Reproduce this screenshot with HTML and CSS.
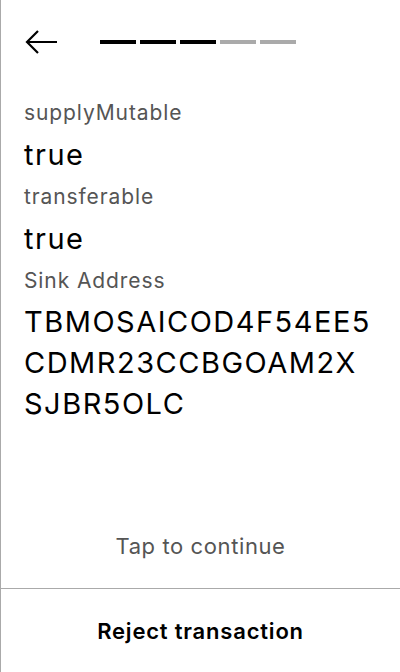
FILE: index.html
```html
<!DOCTYPE html>
<html>
<head>
<meta charset="utf-8">
<link rel="stylesheet" href="styles.css">
</head>
<body>
<div class="screen">
  <header class="header">
    <svg class="back" width="34" height="28" viewBox="0 0 34 28">
      <path d="M33 14 H3 M14 3 L3 14 L14 25" fill="none" stroke="#000" stroke-width="2.2"/>
    </svg>
    <div class="steps">
      <span class="step on"></span>
      <span class="step on"></span>
      <span class="step on"></span>
      <span class="step"></span>
      <span class="step"></span>
    </div>
  </header>
  <main class="content">
    <div class="label">supplyMutable</div>
    <div class="value">true</div>
    <div class="label">transferable</div>
    <div class="value">true</div>
    <div class="label">Sink Address</div>
    <div class="value address">TBMOSAICOD4F54EE5 CDMR23CCBGOAM2X SJBR5OLC</div>
  </main>
  <div class="tap">Tap to continue</div>
  <footer class="footer">Reject transaction</footer>
</div>
</body>
</html>
```
FILE: styles.css
```css
* { box-sizing: border-box; }
html, body { margin: 0; padding: 0; background: #fff; }
body { font-family: Inter, "Noto Sans", sans-serif; color: #000; }
.screen {
  width: 400px;
  height: 672px;
  border-left: 1px solid #aaa;
  display: flex;
  flex-direction: column;
}
.header {
  height: 84px;
  display: flex;
  align-items: center;
  padding-left: 23px;
}
.back { display: block; margin-right: 42px; }
.steps { display: flex; gap: 4px; }
.step { width: 36px; height: 4px; background: #aaa; }
.step.on { background: #000; }
.content { padding: 14px 20px 0 23px; flex: 1; }
.label { font-size: 21px; line-height: 30px; letter-spacing: 0.9px; color: #555; }
.value { font-size: 29px; line-height: 54px; letter-spacing: 1.5px; color: #000; }
.value.address { line-height: 41px; padding-top: 5px; }
.tap {
  text-align: center;
  font-size: 22px;
  letter-spacing: 0.6px;
  color: #555;
  padding-bottom: 29px;
}
.footer {
  height: 84px;
  border-top: 1px solid #aaa;
  display: flex;
  align-items: center;
  justify-content: center;
  font-size: 22px;
  letter-spacing: 0.8px;
  font-weight: 600;
}
```
